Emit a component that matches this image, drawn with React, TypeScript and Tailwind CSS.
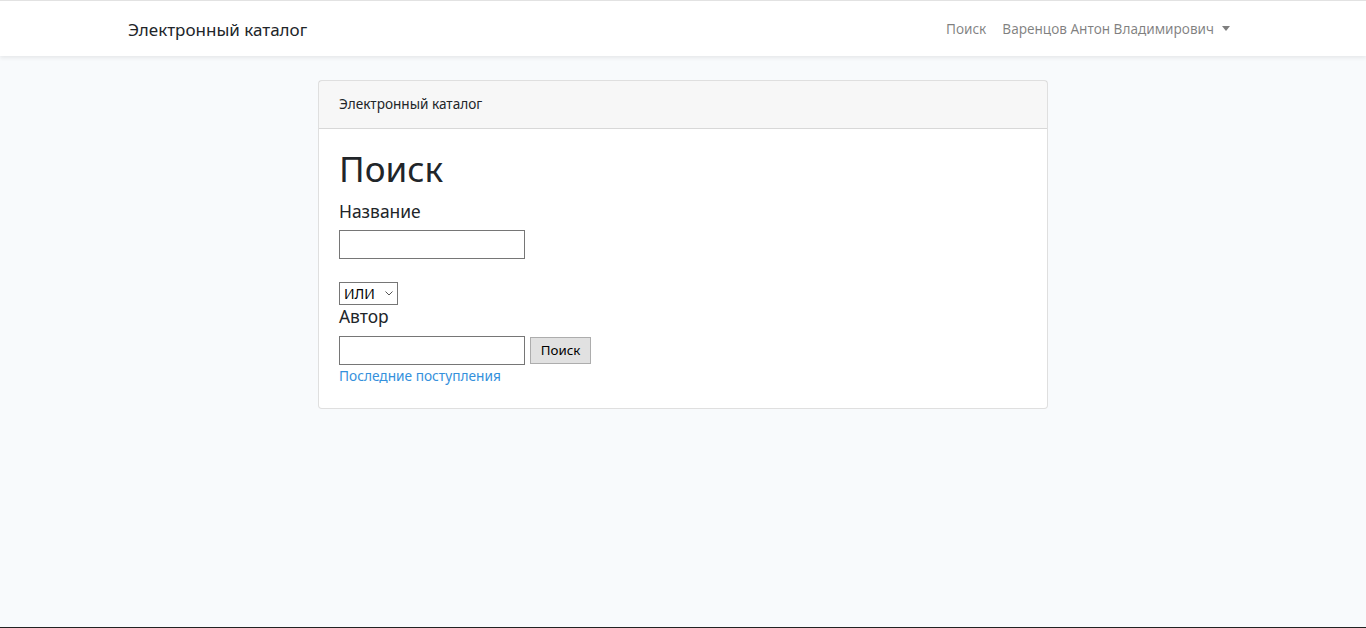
import { useState } from 'react';

const Navbar = () => {
  return (
    <nav className="bg-white shadow-[0_2px_4px_rgba(0,0,0,0.075)] border-t border-[#e2e2e2]">
      <div className="max-w-[1140px] mx-auto px-[15px] h-[55px] flex items-center justify-between">
        {/* Brand */}
        <a href="#" className="text-[17px] text-[#212529] leading-none pt-[1px]">
          Электронный каталог
        </a>

        {/* Right links */}
        <ul className="flex items-center text-[13.6px] text-black/50 pt-[1px]">
          <li>
            <a href="#" className="block px-2 py-2">Поиск</a>
          </li>
          <li>
            <a href="#" className="flex items-center px-2 py-2">
              Варенцов Антон Владимирович
              <span className="ml-[8px] inline-block w-0 h-0 border-t-[5px] border-t-black/50 border-x-[4px] border-x-transparent"></span>
            </a>
          </li>
        </ul>
      </div>
    </nav>
  );
};

const SearchCard = () => {
  const [title, setTitle] = useState('');
  const [author, setAuthor] = useState('');
  const [mode, setMode] = useState('or');

  return (
    <div className="w-[730px] mx-auto bg-white border border-black/[0.125] rounded-[4px]">
      {/* Card header */}
      <div className="h-[48px] px-5 flex items-center bg-black/[0.03] border-b border-black/[0.125] text-[13.6px] text-[#212529]">
        Электронный каталог
      </div>

      {/* Card body */}
      <div className="px-5 pt-[18px] pb-[22px] text-[#212529]">
        <h1 className="text-[35px] leading-[43px] mb-[10px]">Поиск</h1>

        <h5 className="text-[17.4px] leading-[22px] mb-2">Название</h5>
        <input
          type="text"
          value={title}
          onChange={(e) => setTitle(e.target.value)}
          className="block w-[186px] h-[29px] border border-[#767676] px-1 text-[13px] outline-none"
        />

        {/* OR / AND selector */}
        <div className="relative inline-flex mt-[23px]">
          <select
            value={mode}
            onChange={(e) => setMode(e.target.value)}
            className="appearance-none h-[23px] w-[59px] border border-[#767676] pl-[4px] pr-[18px] text-[14px] leading-none text-black bg-white outline-none"
          >
            <option value="or">ИЛИ</option>
            <option value="and">И</option>
          </select>
          <svg className="absolute right-[5px] top-[9px] w-[8px] h-[5px] pointer-events-none" viewBox="0 0 8 5" fill="none" stroke="#555" strokeWidth="1">
            <path d="M0.5 0.5 L4 4 L7.5 0.5" />
          </svg>
        </div>

        <h5 className="text-[17.4px] leading-[22px] mb-[9px]">Автор</h5>
        <div className="flex items-center gap-[5px]">
          <input
            type="text"
            value={author}
            onChange={(e) => setAuthor(e.target.value)}
            className="w-[186px] h-[29px] border border-[#767676] px-1 text-[13px] outline-none"
          />
          <button className="h-[27px] w-[61px] bg-[#e1e1e1] border border-[#adadad] text-[13.3px] text-black">
            Поиск
          </button>
        </div>
        <a href="#" className="block mt-[1px] text-[13.7px] leading-[20px] text-[#3490dc]">
          Последние поступления
        </a>
      </div>
    </div>
  );
};

export default function App() {
  return (
    <div
      className="min-h-[628px] bg-[#f8fafc] border-b border-[#222] flex flex-col"
      style={{ fontFamily: '"Noto Sans", "Open Sans", sans-serif' }}
    >
      <Navbar />
      <main className="py-6 flex-1">
        <SearchCard />
      </main>
    </div>
  );
}
